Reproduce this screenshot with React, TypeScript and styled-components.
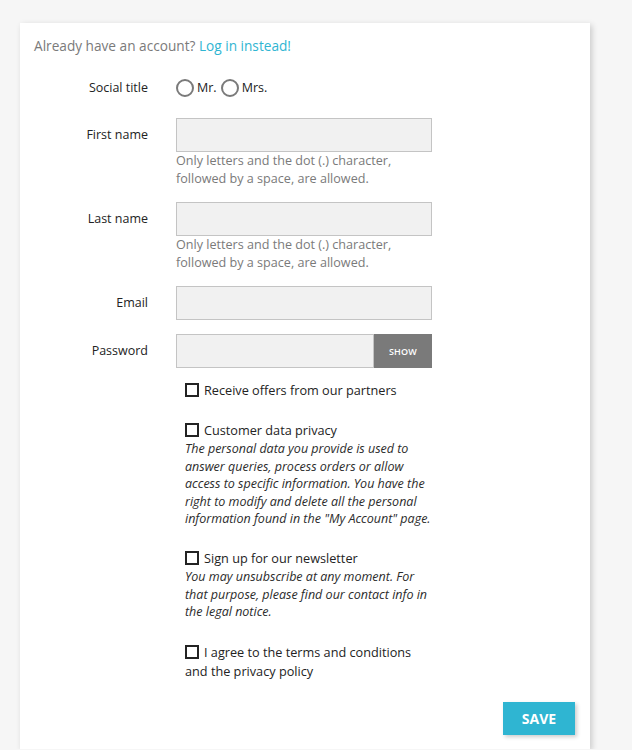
import React from "react";
import styled, { createGlobalStyle } from "styled-components";

const GlobalStyle = createGlobalStyle`
  body {
    margin: 0;
    background: #f6f6f6;
    font-family: "Open Sans", "Noto Sans", sans-serif;
    color: #232323;
  }
`;

const Page = styled.div`
  padding: 23px 0 0 20px;
`;

const Card = styled.section`
  width: 570px;
  box-sizing: border-box;
  background: #fff;
  box-shadow: 2px 2px 6px rgba(0, 0, 0, 0.18);
  padding: 13px 15px 14px 14px;
`;

const LoginPrompt = styled.p`
  margin: 0;
  font-size: 13.65px;
  line-height: 20px;
  color: #7a7a7a;
`;

const LoginLink = styled.a`
  color: #2fb5d2;
  text-decoration: none;
`;

const Form = styled.form`
  margin-top: 21px;
`;

const FieldRow = styled.div<{ $gap?: number }>`
  display: grid;
  grid-template-columns: 114px 256px;
  column-gap: 28px;
  margin-bottom: ${(p) => p.$gap ?? 14}px;
`;

const Label = styled.label<{ $lineHeight?: number }>`
  text-align: right;
  font-size: 12.5px;
  line-height: ${(p) => p.$lineHeight ?? 34}px;
  color: #232323;
`;

const Input = styled.input`
  box-sizing: border-box;
  width: 100%;
  height: 34px;
  margin: 0;
  padding: 0 10px;
  background: #f1f1f1;
  border: 1px solid #c4c4c4;
  outline: none;
  font-family: inherit;
  font-size: 13px;
`;

const Help = styled.div`
  font-size: 12.6px;
  line-height: 18px;
  color: #7a7a7a;
`;

const Radios = styled.div`
  display: flex;
  align-items: center;
  height: 21px;
  font-size: 12.5px;
`;

const RadioOption = styled.label`
  display: flex;
  align-items: center;
  margin-right: 4px;
  color: #232323;
`;

const RadioCircle = styled.span`
  box-sizing: border-box;
  width: 18px;
  height: 18px;
  border: 2px solid #7a7a7a;
  border-radius: 50%;
  margin-right: 3px;
`;

const PasswordGroup = styled.div`
  display: flex;
`;

const ShowButton = styled.button`
  width: 58px;
  height: 34px;
  flex: none;
  border: none;
  background: #7a7a7a;
  color: #fff;
  font-family: inherit;
  font-size: 9px;
  font-weight: 600;
  letter-spacing: 0.2px;
`;

const CheckList = styled.div`
  margin-top: 13px;
  padding-left: 151px;
  width: 254px;
`;

const CheckItem = styled.div<{ $gap?: number }>`
  margin-bottom: ${(p) => p.$gap ?? 21}px;
`;

const CheckHead = styled.label`
  display: block;
  font-size: 12.7px;
  line-height: 19px;
  color: #232323;
`;

const Box = styled.span`
  display: inline-block;
  box-sizing: border-box;
  width: 14px;
  height: 14px;
  border: 2px solid #232323;
  margin-right: 5px;
  vertical-align: -2px;
`;

const Note = styled.em`
  display: block;
  font-size: 12.5px;
  line-height: 17.6px;
  color: #2b2b2b;
`;

const Footer = styled.div`
  display: flex;
  justify-content: flex-end;
  margin-top: 21px;
`;

const SaveButton = styled.button`
  width: 72px;
  height: 33px;
  border: none;
  background: #2fb5d2;
  color: #fff;
  font-family: inherit;
  font-size: 14px;
  font-weight: 700;
  text-transform: uppercase;
  box-shadow: 2px 2px 4px rgba(0, 0, 0, 0.2);
`;

const NAME_HELP = (
  <Help>
    Only letters and the dot (.) character,
    <br />
    followed by a space, are allowed.
  </Help>
);

export default function App() {
  return (
    <Page>
      <GlobalStyle />
      <Card>
        <LoginPrompt>
          Already have an account? <LoginLink href="#">Log in instead!</LoginLink>
        </LoginPrompt>
        <Form onSubmit={(e) => e.preventDefault()}>
          <FieldRow $gap={20}>
            <Label $lineHeight={21}>Social title</Label>
            <Radios>
              <RadioOption>
                <RadioCircle />
                Mr.
              </RadioOption>
              <RadioOption>
                <RadioCircle />
                Mrs.
              </RadioOption>
            </Radios>
          </FieldRow>
          <FieldRow>
            <Label>First name</Label>
            <div>
              <Input />
              {NAME_HELP}
            </div>
          </FieldRow>
          <FieldRow>
            <Label>Last name</Label>
            <div>
              <Input />
              {NAME_HELP}
            </div>
          </FieldRow>
          <FieldRow>
            <Label>Email</Label>
            <Input type="email" />
          </FieldRow>
          <FieldRow $gap={0}>
            <Label>Password</Label>
            <PasswordGroup>
              <Input type="password" />
              <ShowButton type="button">SHOW</ShowButton>
            </PasswordGroup>
          </FieldRow>
          <CheckList>
            <CheckItem>
              <CheckHead>
                <Box />
                Receive offers from our partners
              </CheckHead>
            </CheckItem>
            <CheckItem>
              <CheckHead>
                <Box />
                Customer data privacy
              </CheckHead>
              <Note>
                The personal data you provide is used to answer queries, process
                orders or allow access to specific information. You have the
                right to modify and delete all the personal information found in
                the "My Account" page.
              </Note>
            </CheckItem>
            <CheckItem $gap={22}>
              <CheckHead>
                <Box />
                Sign up for our newsletter
              </CheckHead>
              <Note>
                You may unsubscribe at any moment. For that purpose, please find
                our contact info in the legal notice.
              </Note>
            </CheckItem>
            <CheckItem $gap={0}>
              <CheckHead>
                <Box />
                I agree to the terms and conditions
                <br />
                and the privacy policy
              </CheckHead>
            </CheckItem>
          </CheckList>
          <Footer>
            <SaveButton type="submit">Save</SaveButton>
          </Footer>
        </Form>
      </Card>
    </Page>
  );
}
